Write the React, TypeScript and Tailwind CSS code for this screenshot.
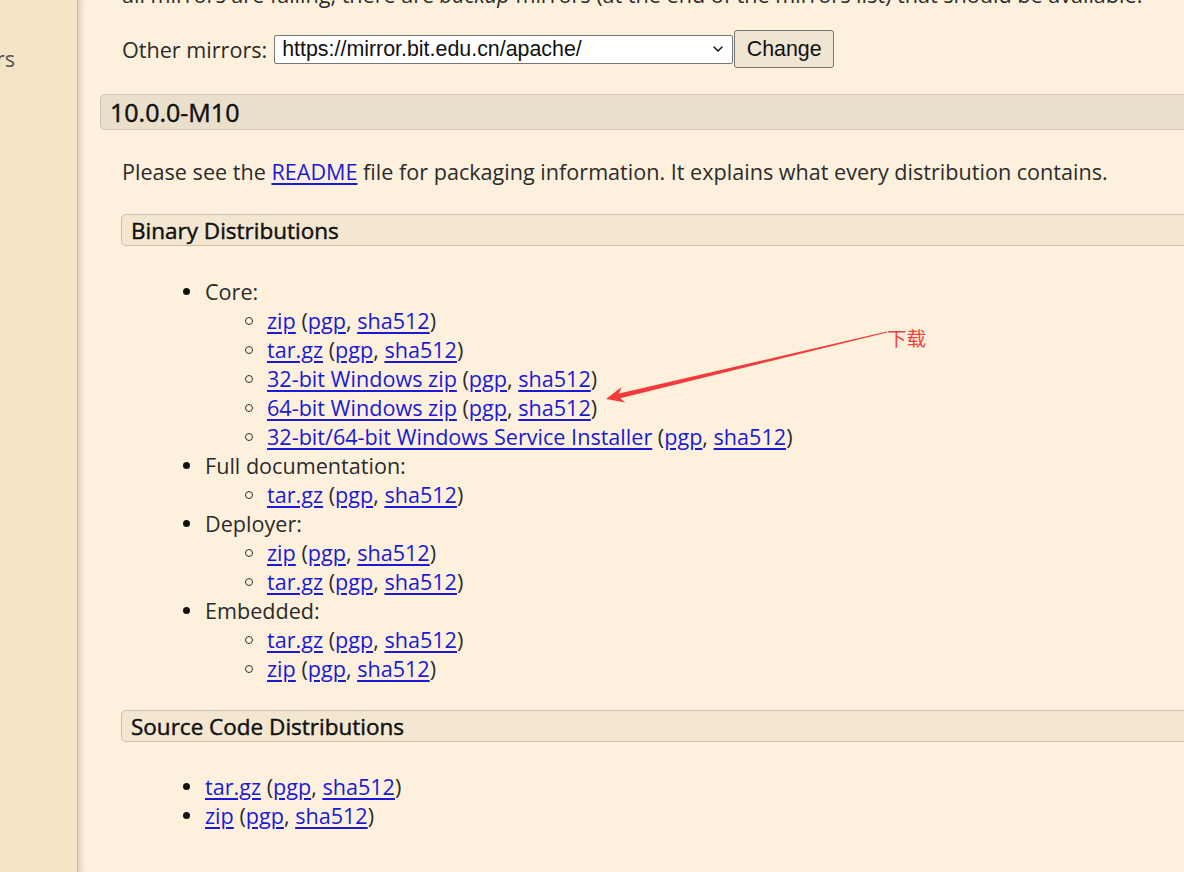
import { ChevronDown } from "lucide-react";

const font = { fontFamily: '"Open Sans", "Noto Sans", sans-serif' };

const core = [
  "zip",
  "tar.gz",
  "32-bit Windows zip",
  "64-bit Windows zip",
  "32-bit/64-bit Windows Service Installer",
];

function DistLink({ label }: { label: string }) {
  return (
    <span>
      <a href="#" className="text-[#1a1ad6] underline underline-offset-[3px]">
        {label}
      </a>{" "}
      (
      <a href="#" className="text-[#1a1ad6] underline underline-offset-[3px]">
        pgp
      </a>
      ,{" "}
      <a href="#" className="text-[#1a1ad6] underline underline-offset-[3px]">
        sha512
      </a>
      )
    </span>
  );
}

function Disc() {
  return (
    <span className="w-[22px] shrink-0 flex items-center">
      <span className="w-[7px] h-[7px] rounded-full bg-[#111]" />
    </span>
  );
}

function Circle() {
  return (
    <span className="w-[22px] shrink-0 flex items-center">
      <span className="w-[8px] h-[8px] rounded-full border-[1.5px] border-[#333]" />
    </span>
  );
}

function Group({ title, items }: { title: string; items: string[] }) {
  return (
    <li>
      <div className="flex items-center h-[29px]">
        <Disc />
        <span>{title}</span>
      </div>
      <ul className="pl-[62px]">
        {items.map((it, i) => (
          <li key={i} className="flex items-center h-[29px]">
            <Circle />
            <DistLink label={it} />
          </li>
        ))}
      </ul>
    </li>
  );
}

export default function App() {
  return (
    <div
      className="relative w-[1184px] h-[872px] overflow-hidden flex bg-[#fdf1dd] text-[#2b2b2b] text-[21.6px] leading-[29px]"
      style={font}
    >
      {/* side nav */}
      <div className="w-[78px] shrink-0 bg-[#f5e5c6] border-r border-[#cdbd9f]">
        <div className="mt-[44px] -ml-[4px] text-[#555] whitespace-nowrap">rs</div>
      </div>

      {/* main */}
      <div className="flex-1 pl-[22px] shadow-[inset_7px_0_6px_-5px_rgba(0,0,0,0.18)]">
        <div className="pl-[22px] -mt-[20px] whitespace-nowrap">
          all mirrors are failing, there are <em>backup</em> mirrors (at the end of the
          mirrors list) that should be available.
        </div>

        <div className="pl-[22px] mt-[21px] flex items-center h-[38px]">
          <span className="mr-[7px]">Other mirrors:</span>
          <div
            className="relative w-[459px] h-[29px] bg-white border border-[#767676] rounded-[2px] flex items-center pl-[7px] text-[#111] text-[21.4px]"
            style={{ fontFamily: '"Liberation Sans", Arial, sans-serif' }}
          >
            https://mirror.bit.edu.cn/apache/
            <ChevronDown className="absolute right-[6px] w-[16px] h-[16px]" strokeWidth={2.2} />
          </div>
          <button
            className="ml-px w-[100px] h-[38px] bg-[#efe5d3] border border-[#767676] rounded-[3px] text-[#111] text-[21.4px]"
            style={{ fontFamily: '"Liberation Sans", Arial, sans-serif' }}
          >
            Change
          </button>
        </div>

        <h2 className="mt-[26px] h-[36px] -mr-[10px] bg-[#e9dfca] border border-[#d2c6b2] rounded-l-[5px] pl-[9px] flex items-center text-[25px] text-[#111] [-webkit-text-stroke:0.45px_#111]">
          10.0.0-M10
        </h2>

        <div className="pl-[21px]">
          <p className="mt-[27px] pl-px">
            Please see the{" "}
            <a href="#" className="text-[#1a1ad6] underline underline-offset-[3px]">
              README
            </a>{" "}
            file for packaging information. It explains what every distribution contains.
          </p>

          <h3 className="mt-[28px] h-[32px] -mr-[10px] bg-[#f3e7d2] border border-[#cdbfa9] rounded-l-[5px] pl-[9px] flex items-center text-[22.5px] text-[#111] [-webkit-text-stroke:0.45px_#111]">
            Binary Distributions
          </h3>

          <ul className="mt-[31px] pl-[62px]">
            <Group title="Core:" items={core} />
            <Group title="Full documentation:" items={["tar.gz"]} />
            <Group title="Deployer:" items={["zip", "tar.gz"]} />
            <Group title="Embedded:" items={["tar.gz", "zip"]} />
          </ul>

          <h3 className="mt-[27px] h-[32px] -mr-[10px] bg-[#f3e7d2] border border-[#cdbfa9] rounded-l-[5px] pl-[9px] flex items-center text-[22.5px] text-[#111] [-webkit-text-stroke:0.45px_#111]">
            Source Code Distributions
          </h3>

          <ul className="mt-[30px] pl-[62px]">
            {["tar.gz", "zip"].map((it) => (
              <li key={it} className="flex items-center h-[29px]">
                <Disc />
                <DistLink label={it} />
              </li>
            ))}
          </ul>
        </div>
      </div>

      {/* annotation */}
      <svg
        className="absolute left-0 top-0 pointer-events-none"
        width="1184"
        height="872"
        viewBox="0 0 1184 872"
      >
        <polygon
          points="886.9,331.6 619,393.4 621.6,387 606,399 625.4,402.6 620.2,398.2 887.1,332.4"
          fill="#f23b3b"
        />
      </svg>
      <span
        className="absolute left-[887px] top-[324px] text-[19.5px] leading-[28px] text-[#f04040]"
        style={{ fontFamily: '"Noto Sans CJK SC", sans-serif' }}
      >
        下载
      </span>
    </div>
  );
}
